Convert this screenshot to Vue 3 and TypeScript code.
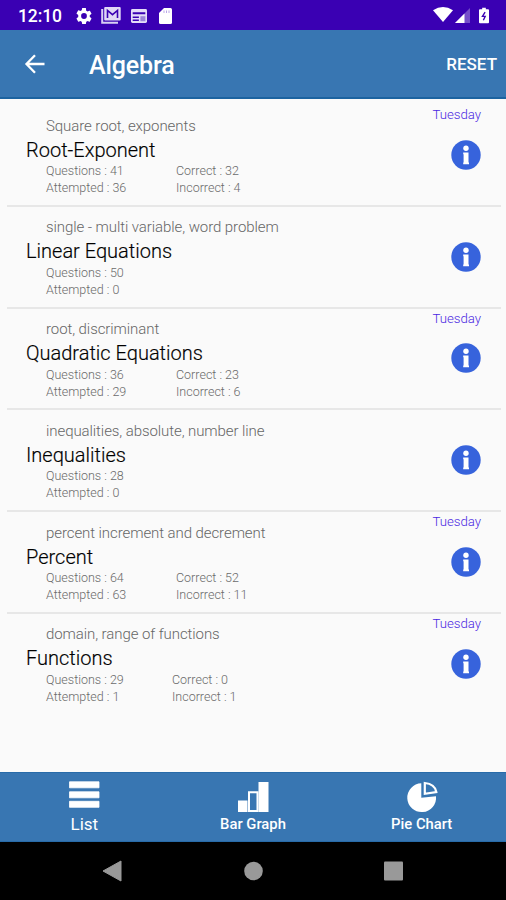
<script setup lang="ts">
interface Topic {
  title: string
  hint: string
  questions: number
  attempted: number
  correct?: number
  incorrect?: number
  day?: string
}

const topics: Topic[] = [
  { title: 'Root-Exponent', hint: 'Square root, exponents', questions: 41, attempted: 36, correct: 32, incorrect: 4, day: 'Tuesday' },
  { title: 'Linear Equations', hint: 'single - multi variable, word problem', questions: 50, attempted: 0 },
  { title: 'Quadratic Equations', hint: 'root, discriminant', questions: 36, attempted: 29, correct: 23, incorrect: 6, day: 'Tuesday' },
  { title: 'Inequalities', hint: 'inequalities, absolute, number line', questions: 28, attempted: 0 },
  { title: 'Percent', hint: 'percent increment and decrement', questions: 64, attempted: 63, correct: 52, incorrect: 11, day: 'Tuesday' },
  { title: 'Functions', hint: 'domain, range of functions', questions: 29, attempted: 1, correct: 0, incorrect: 1, day: 'Tuesday' },
]
</script>

<template>
  <div class="screen">
    <header class="status">
      <span class="clock">12:10</span>
      <svg class="gear" viewBox="2 2 20 20"><path fill="#fff" d="M19.14 12.94c.04-.3.06-.61.06-.94s-.02-.64-.07-.94l2.03-1.58a.5.5 0 0 0 .12-.61l-1.92-3.32a.49.49 0 0 0-.59-.22l-2.39.96a7 7 0 0 0-1.62-.94l-.36-2.54A.48.48 0 0 0 13.92 2h-3.84a.48.48 0 0 0-.48.41l-.36 2.54c-.59.24-1.13.57-1.62.94l-2.39-.96a.48.48 0 0 0-.59.22L2.72 8.47a.48.48 0 0 0 .12.61l2.03 1.58a6 6 0 0 0 0 2.68l-2.03 1.58a.5.5 0 0 0-.12.61l1.92 3.32c.12.22.37.29.59.22l2.39-.96c.5.38 1.03.7 1.62.94l.36 2.54c.05.24.24.41.48.41h3.84c.24 0 .44-.17.47-.41l.36-2.54c.59-.24 1.13-.56 1.62-.94l2.39.96c.22.08.47 0 .59-.22l1.92-3.32a.48.48 0 0 0-.12-.61zM12 15.6a3.6 3.6 0 1 1 0-7.2 3.6 3.6 0 0 1 0 7.2z" /></svg>
      <svg class="mail" viewBox="0 0 20 17"><path d="M1.2 2v13.800H17" fill="none" stroke="#d9d0f4" stroke-width="2" /><rect x="3.200" y="0" width="16.500" height="13.500" rx="1" fill="#e0d8f6" /><path d="M6.500 11V3.500l5 4.200 5-4.200V11" fill="none" stroke="#3a00b3" stroke-width="1.600" /></svg>
      <svg class="news" viewBox="0 0 16 14"><rect width="16" height="14" rx="1.4" fill="#e4dcf8" /><path d="M1.7 3.200h12.6v2H1.7zM1.7 7.400h6.200v1.5H1.7zM1.7 10.600h6.200v1.5H1.7z" fill="#3a00b3" /><path d="M9.400 7.200h5v5h-5z" fill="#9a83d8" /></svg>
      <svg class="card" viewBox="0 0 13 16"><path d="M5 0h6.500A1.500 1.500 0 0 1 13 1.500v13a1.500 1.500 0 0 1-1.500 1.500h-10A1.500 1.500 0 0 1 0 14.500V5z" fill="#fff" /><path d="M5 2.500v2.500M7.500 2.500v2.500M10 2.500v2.500" stroke="#b9a6e8" stroke-width="1" /></svg>
      <span class="spacer"></span>
      <svg class="wifi" viewBox="0 0 20 15"><path d="M0 3.300Q10-3.300 20 3.300L10 15z" fill="#fff" /></svg>
      <svg class="signal" viewBox="0 0 15 15"><path d="M15 0v15H0z" fill="#fff" opacity=".3" /><path d="M9.500 5.500V15H0z" fill="#fff" /></svg>
      <svg class="battery" viewBox="0 0 11 17"><path d="M3.500 0h4v1.700H10a1 1 0 0 1 1 1V16a1 1 0 0 1-1 1H1a1 1 0 0 1-1-1V2.700a1 1 0 0 1 1-1h2.500z" fill="#fff" /><path d="M6.700 4.800 3.800 9.500h3L4.800 13.700" fill="none" stroke="#3a00b3" stroke-width="1.500" /></svg>
    </header>

    <nav class="toolbar">
      <svg class="back" viewBox="0 0 20 20"><path d="M19.500 10H1.800M10 1.300 1.500 10l8.500 8.700" fill="none" stroke="#fff" stroke-width="2.300" /></svg>
      <h1>Algebra</h1>
      <button class="reset">RESET</button>
    </nav>

    <main class="list">
      <article v-for="topic in topics" :key="topic.title" class="row">
        <div class="body">
          <p class="hint">{{ topic.hint }}</p>
          <h2>{{ topic.title }}</h2>
          <div class="stats">
            <div class="stat-col">
              <span>Questions : {{ topic.questions }}</span>
              <span>Attempted : {{ topic.attempted }}</span>
            </div>
            <div v-if="topic.correct !== undefined" class="stat-col">
              <span>Correct : {{ topic.correct }}</span>
              <span>Incorrect : {{ topic.incorrect }}</span>
            </div>
          </div>
        </div>
        <aside class="side">
          <span class="day">{{ topic.day }}</span>
          <svg class="info" viewBox="0 0 30 30"><circle cx="15" cy="15" r="14.700" fill="#3763dc" /><circle cx="15" cy="8.300" r="2.700" fill="#fff" /><path d="M12.200 12.500h5.300v10h.5v1.700h-5.800v-1.700h.4v-8.200h-.4z" fill="#fff" /></svg>
        </aside>
      </article>
    </main>

    <footer class="tabs">
      <button class="tab active">
        <svg class="tab-icon" viewBox="0 0 32 32"><path d="M1.500 2.800h29.500v6H1.500zM1.500 12.800h29.500v6H1.500zM1.500 22.300h29.500v6H1.500z" fill="#fff" stroke="#fff" stroke-width=".8" stroke-linejoin="round" /></svg>
        <span>List</span>
      </button>
      <button class="tab">
        <svg class="tab-icon" viewBox="0 0 32 32"><path d="M1 21.500h9.500V33H1zM21.500 3H31.500v30H21.500z" fill="#fff" /><path d="M12 13.300h8.500v18.700h-8.500z" fill="none" stroke="#fff" stroke-width="2" /></svg>
        <span>Bar Graph</span>
      </button>
      <button class="tab">
        <svg class="tab-icon" viewBox="0 0 32 32"><path d="M15.300 4.300V18.800L30 17.200A14.400 14.400 0 1 1 15.300 4.300z" fill="#fff" /><path d="M18.800 4Q28.800 4.800 30.300 13L18.800 14.800z" fill="none" stroke="#fff" stroke-width="2.200" /></svg>
        <span>Pie Chart</span>
      </button>
    </footer>

    <div class="system">
      <svg viewBox="0 0 20 22"><path d="M19 1v20L1 11z" fill="#999" stroke="#999" stroke-linejoin="round" /></svg>
      <svg viewBox="0 0 20 22"><circle cx="10.500" cy="11" r="9.300" fill="#999" /></svg>
      <svg viewBox="0 0 20 22"><rect x="0" y="1.500" width="19" height="19" rx="1" fill="#999" /></svg>
    </div>
  </div>
</template>

<style>
body {
  margin: 0;
}
</style>

<style scoped>
.screen {
  box-sizing: border-box;
  display: flex;
  flex-direction: column;
  width: 506px;
  height: 900px;
  overflow: hidden;
  background: #fafafa;
  font-family: Roboto, "Liberation Sans", sans-serif;
}
svg {
  display: block;
  flex: none;
  overflow: visible;
}
h1, h2, p {
  margin: 0;
}
button {
  padding: 0;
  border: 0;
  background: none;
  color: #fff;
  font-family: inherit;
}
.status {
  display: flex;
  align-items: center;
  height: 30px;
  padding: 1px 17px 0 18px;
  box-sizing: border-box;
  background: #3a00b3;
  color: #fff;
}
.clock {
  width: 58px;
  font-size: 17.500px;
  font-weight: 500;
  letter-spacing: -0.100px;
}
.gear {
  width: 16px;
  height: 16px;
}
.mail {
  width: 20px;
  height: 17px;
  margin-left: 9px;
}
.news {
  width: 16px;
  height: 14px;
  margin-left: 10px;
}
.card {
  width: 13px;
  height: 16px;
  margin-left: 12px;
}
.spacer {
  flex: 1;
}
.wifi {
  width: 20px;
  height: 15px;
  margin-bottom: 2px;
}
.signal {
  width: 15px;
  height: 15px;
  margin-left: 2px;
}
.battery {
  width: 10px;
  height: 17px;
  margin-left: 9px;
}
.toolbar {
  display: flex;
  align-items: center;
  height: 69px;
  box-sizing: border-box;
  padding: 0 9px 0 25px;
  border-bottom: 2px solid #1c63a0;
  background: #3876b2;
  color: #fff;
}
.back {
  width: 20px;
  height: 20px;
}
.toolbar h1 {
  flex: 1;
  margin-left: 44px;
  padding-top: 4px;
  font-size: 25px;
  font-weight: 500;
  letter-spacing: -0.100px;
}
.reset {
  font-size: 17px;
  font-weight: 500;
}
.list {
  flex: 1;
  padding: 6px 5px 0 7px;
}
.row {
  display: flex;
  justify-content: space-between;
  height: 101.750px;
  box-sizing: border-box;
  padding: 0 20px 0 19px;
  border-bottom: 2px solid #e7e7e7;
}
.row:last-child {
  border-bottom-color: transparent;
}
.hint {
  padding: 11.500px 0 0 20px;
  color: #666;
  font-size: 15px;
  font-weight: 300;
  letter-spacing: -0.080px;
  line-height: 18px;
}
.row h2 {
  padding-top: 1px;
  color: #000;
  font-size: 20px;
  font-weight: 300;
  line-height: 28px;
  -webkit-text-stroke: 0.150px #000;
}
.stats {
  display: flex;
  margin-top: -1.500px;
  padding-left: 20px;
  color: #6a6a6a;
  font-size: 12.500px;
  font-weight: 300;
  line-height: 17px;
}
.stat-col {
  display: flex;
  flex-direction: column;
  width: 130px;
  white-space: nowrap;
}
.row:last-child .stat-col:first-child {
  width: 126px;
}
.side {
  display: flex;
  flex-direction: column;
  align-items: flex-end;
}
.day {
  height: 34.750px;
  padding-top: 1px;
  box-sizing: border-box;
  color: #4b28e2;
  font-size: 13.200px;
  font-weight: 300;
  line-height: 18px;
}
.info {
  width: 30px;
  height: 30px;
}
.tabs {
  display: grid;
  grid-template-columns: repeat(3, 1fr);
  height: 70px;
  box-sizing: border-box;
  border-top: 1px solid #286ba9;
  border-bottom: 1px solid #286ba9;
  background: #3876b2;
}
.tab {
  display: flex;
  flex-direction: column;
  align-items: center;
  padding-top: 6px;
  font-size: 14.800px;
  font-weight: 500;
}
.tab.active {
  font-size: 17px;
  font-weight: 400;
}
.tab-icon {
  width: 32px;
  height: 32px;
}
.tab span {
  margin-top: 3px;
  line-height: 20px;
}
.system {
  display: flex;
  justify-content: center;
  align-items: center;
  gap: 121px;
  height: 58px;
  background: #000;
}
.system svg {
  width: 20px;
  height: 22px;
}
</style>
